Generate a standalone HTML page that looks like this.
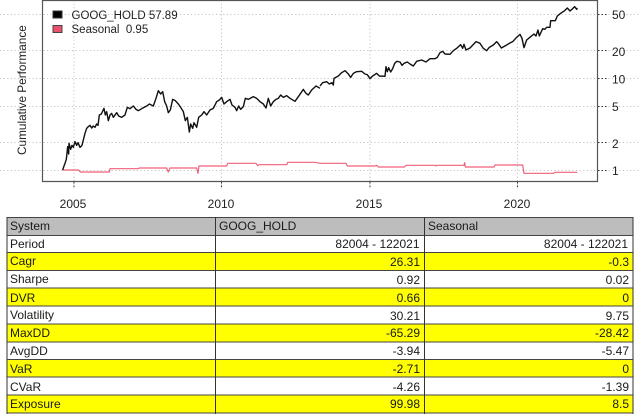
<!DOCTYPE html>
<html><head><meta charset="utf-8"><style>
html,body{margin:0;padding:0;background:#fff}
body{width:640px;height:420px;overflow:hidden;position:relative;font-family:"Liberation Sans",sans-serif}
#w{position:absolute;left:0;top:0;width:640px;height:420px;filter:blur(.35px)}
svg{position:absolute;left:0;top:0}
text{font-family:"Liberation Sans",sans-serif;font-size:12px;fill:#222}
.c{position:absolute;font-size:12px;line-height:18px;color:#1a1a1a;white-space:nowrap}
.r{text-align:right}
</style></head><body><div id="w">
<svg width="640" height="420" viewBox="0 0 640 420">
<g stroke="#c4c4c4" stroke-width="1" stroke-dasharray="1.2 2.4" fill="none">
<path d="M0 14.5H640M0 50.5H640M0 78.5H640M0 106.5H640M0 142.5H640M0 170.5H640"/>
<path d="M74 0V190M221.5 0V190M370 0V190M517.5 0V190"/>
</g>
<g stroke="#333" stroke-width="1" stroke-dasharray="1.5 2" fill="none">
<path d="M598 14.5H607M598 50.5H607M598 78.5H607M598 106.5H607M598 142.5H607M598 170.5H607"/>
<path d="M74 182V189M221.5 182V189M370 182V189M517.5 182V189"/>
</g>
<path d="M42.5 0V181.5H597.5V0M42 .5H598" fill="none" stroke="#555" stroke-width="1.2"/>
<g transform="scale(.33333)" fill="none" stroke-linejoin="round">
<path stroke="#f0607a" stroke-width="3.6" d="M188 510H235L242 516H328L330 506H415L418 504H500L505 516L510 504H590L594 520L597 498H680L683 490H768L773 497L778 494H860L863 487H945L960 490"/>
<path stroke="#111" stroke-width="4.2" d="M188 510L192 498L195 490L199 478L203 440L206 462L207 430L212 448L216 436L220 442L225 425L230 436L234 428L240 442L246 436L250 420L255 400L260 385L265 380L270 376L275 384L280 378L285 382L290 372L294 376L298 345L304 342L312 325L316 345L320 335L325 362L330 345L335 340L340 352L350 338L356 348L365 352L375 345L382 322L390 326L400 318L408 328L415 332L425 326L440 318L448 312L460 318L468 295L475 272L482 282L488 275L494 305L500 318L505 338L511 330L518 298L526 302L535 312L542 322L550 335L556 362L562 352L568 396L572 372L578 385L582 368L590 382L596 352L605 345L612 335L620 345L630 330L640 325L650 305L658 300L665 292L672 312L680 305L690 298L696 315L705 322L710 332L716 318L722 328L730 320L736 295L745 298L760 290L770 295L780 305L790 312L798 324L805 295L812 318L820 305L828 298L835 295L842 285L850 292L860 287L870 295L885 304L895 290L910 268L918 280L925 285L935 270L948 258L960 265"/>
<g transform="translate(960 0)">
<path stroke="#111" stroke-width="4.2" d="M0 258L8 248L20 245L28 252L36 248L40 255L42 235L55 228L65 218L75 212L85 222L92 232L100 220L110 215L125 214L135 222L142 224L150 236L158 228L170 220L178 228L195 229L198 200L202 215L206 203L212 216L218 206L224 190L230 184L240 186L246 196L252 190L262 186L270 192L280 198L290 184L305 180L318 186L330 176L345 176L352 172L360 158L368 154L375 162L390 163L400 152L410 145L422 134L428 145L432 133L438 150L450 144L468 125L480 130L490 145L500 152L508 142L520 135L530 125L536 132L544 144L558 136L568 130L578 125L590 112L600 103L606 115L612 143L620 120L632 110L642 102L648 108L654 90L658 108L668 86L674 88L680 82L690 82L692 62L706 62L712 48L722 40L734 32L742 24L750 33L758 26L764 20L770 28L772 24"/>
<path stroke="#f0607a" stroke-width="3.6" d="M0 490H78L82 498H165L170 496L175 501H253L258 496H345L348 498L350 496H432L434 488L436 501H522L525 495H608L612 520H700L705 517H772"/>
</g>
</g>
<rect x="53" y="11" width="9" height="7" fill="#000" stroke="#333"/>
<rect x="53" y="25.5" width="9" height="7" fill="#e8506c" stroke="#444"/>
<text x="71.5" y="19" style="font-size:11.5px">GOOG_HOLD 57.89</text>
<text x="71.5" y="33" style="font-size:11.5px">Seasonal&#160; 0.95</text>
<text x="26" y="155" transform="rotate(-90 26 155)" style="font-size:11.8px">Cumulative Performance</text>
<g text-anchor="middle">
<text x="73" y="208">2005</text><text x="221" y="208">2010</text><text x="369" y="208">2015</text><text x="517" y="208">2020</text>
</g>
<g>
<text x="612" y="19">50</text><text x="612" y="56">20</text><text x="612" y="83.5">10</text><text x="612" y="111">5</text><text x="612" y="148">2</text><text x="612" y="175">1</text>
</g>
<rect x="7" y="218" width="626" height="17" fill="#bdbdbd"/>
<g fill="#ffff00">
<rect x="7" y="253" width="626" height="17"/><rect x="7" y="288" width="626" height="18"/><rect x="7" y="324" width="626" height="18"/><rect x="7" y="359" width="626" height="18"/><rect x="7" y="395" width="626" height="18"/>
</g>
<path d="M7 217.5H633M7 235.5H633M7 252.5H633M7 270.5H633M7 288H633M7 306H633M7 324H633M7 342H633M7 359.5H633M7 377H633M7 395H633M7 413H633" stroke="#444" stroke-width="1" fill="none"/>
<path d="M7 217V414M215.5 217V414M424.5 217V414M633 217V414" stroke="#333" stroke-width="1" fill="none"/>
</svg>
<div class="c" style="left:10px;top:217px">System</div>
<div class="c" style="left:10px;top:235px">Period</div>
<div class="c" style="left:10px;top:252px">Cagr</div>
<div class="c" style="left:10px;top:270px">Sharpe</div>
<div class="c" style="left:10px;top:289px">DVR</div>
<div class="c" style="left:10px;top:306px">Volatility</div>
<div class="c" style="left:10px;top:324px">MaxDD</div>
<div class="c" style="left:10px;top:342px">AvgDD</div>
<div class="c" style="left:10px;top:360px">VaR</div>
<div class="c" style="left:10px;top:378px">CVaR</div>
<div class="c" style="left:10px;top:395px">Exposure</div>
<div class="c" style="left:219px;top:217px">GOOG_HOLD</div>
<div class="c" style="left:428px;top:217px">Seasonal</div>
<div class="c r" style="left:300px;width:119.5px;top:235px">82004 - 122021</div>
<div class="c r" style="left:300px;width:120px;top:253px">26.31</div>
<div class="c r" style="left:300px;width:120px;top:271px">0.92</div>
<div class="c r" style="left:300px;width:120px;top:289px">0.66</div>
<div class="c r" style="left:300px;width:120px;top:307px">30.21</div>
<div class="c r" style="left:300px;width:120px;top:324px">-65.29</div>
<div class="c r" style="left:300px;width:120px;top:342px">-3.94</div>
<div class="c r" style="left:300px;width:120px;top:360px">-2.71</div>
<div class="c r" style="left:300px;width:120px;top:378px">-4.26</div>
<div class="c r" style="left:300px;width:120px;top:395px">99.98</div>
<div class="c r" style="left:508px;width:120px;top:235px">82004 - 122021</div>
<div class="c r" style="left:509px;width:120px;top:253px">-0.3</div>
<div class="c r" style="left:509px;width:120px;top:271px">0.02</div>
<div class="c r" style="left:509px;width:120px;top:289px">0</div>
<div class="c r" style="left:509px;width:120px;top:307px">9.75</div>
<div class="c r" style="left:509px;width:120px;top:324px">-28.42</div>
<div class="c r" style="left:509px;width:120px;top:342px">-5.47</div>
<div class="c r" style="left:509px;width:120px;top:360px">0</div>
<div class="c r" style="left:509px;width:120px;top:378px">-1.39</div>
<div class="c r" style="left:509px;width:120px;top:395px">8.5</div>
</div></body></html>
